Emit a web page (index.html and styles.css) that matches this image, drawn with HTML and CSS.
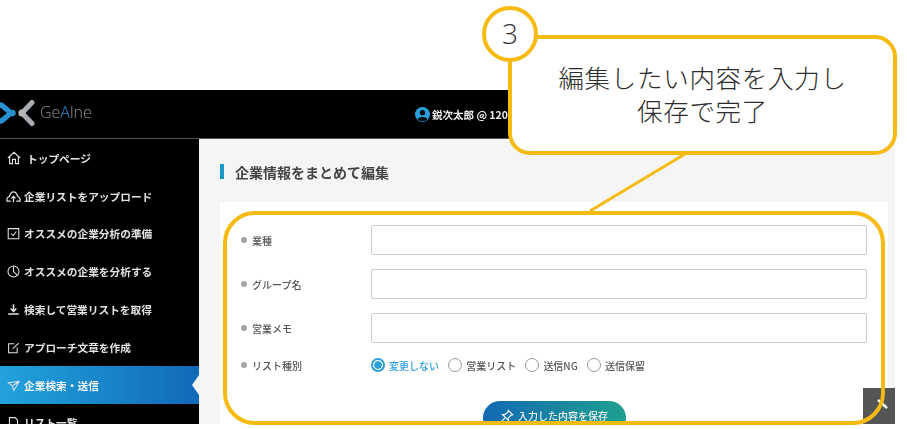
FILE: index.html
```html
<!DOCTYPE html>
<html lang="ja">
<head>
<meta charset="utf-8">
<title>企業情報をまとめて編集</title>
<link rel="stylesheet" href="styles.css">
</head>
<body>
<div class="app">
  <header class="topbar">
    <div class="logo">
      <svg class="logo-mark" width="38" height="30" viewBox="0 0 38 30">
        <path d="M-3 5 L2 6.500 L11 14 L2 21.500 L-3 23" fill="none" stroke="#2a8fd0" stroke-width="5.500" stroke-linejoin="round"/>
        <circle cx="12.500" cy="14" r="3.200" fill="#2a8fd0"/>
        <path d="M32 3.500 L22 14 L32 24.500" fill="none" stroke="#a9acb0" stroke-width="5" stroke-linecap="round" stroke-linejoin="round"/>
        <circle cx="22" cy="14" r="3.600" fill="#b5b8bb"/>
      </svg>
      <span class="logo-text">Ge<span class="logo-a">A</span>lne</span>
    </div>
    <div class="user">
      <svg width="15" height="15" viewBox="0 0 16 16"><circle cx="8" cy="8" r="8" fill="#2a9fdc"/><circle cx="8" cy="6" r="2.800" fill="#0a0a0a"/><path d="M2.800 13 C4 9.800 12 9.800 13.200 13 A7 7 0 0 1 2.800 13Z" fill="#0a0a0a"/></svg>
      <span>鋭次太郎 @ 120</span>
    </div>
  </header>
  <div class="columns">
    <nav class="sidebar">
      <a class="nav-item"><svg class="ico ico-home" viewBox="0 0 16 16"><path d="M1 8 L8 1.500 L15 8 M3 6.500 V14.500 H6.300 V9.500 H9.700 V14.500 H13 V6.500"/></svg>トップページ</a>
      <a class="nav-item"><svg class="ico ico-cloud" viewBox="0 0 16 16"><path d="M5 13 H1 L1 11 C1 9.500 2 8.500 3.500 8 C4.500 4.500 6 3 8 3 C10 3 11.500 4.500 12.500 8 C14 8.500 15 9.500 15 11 V13 H11 M8 14 V8 M5.800 10 L8 7.800 L10.200 10"/></svg>企業リストをアップロード</a>
      <a class="nav-item"><svg class="ico" viewBox="0 0 16 16"><path d="M1.500 2 H14.500 V14.500 H1.500 Z M5 8 L7.500 10.500 L11.500 5.500"/></svg>オススメの企業分析の準備</a>
      <a class="nav-item"><svg class="ico" viewBox="0 0 16 16"><circle cx="8" cy="8" r="6.800"/><path d="M8 1.500 V8 L12.500 12.500"/></svg>オススメの企業を分析する</a>
      <a class="nav-item"><svg class="ico ico-bold" viewBox="0 0 16 16"><path d="M8 1.500 V10 M4.500 6.800 L8 10.300 L11.500 6.800 M1.500 13.500 H14.500"/></svg>検索して営業リストを取得</a>
      <a class="nav-item"><svg class="ico" viewBox="0 0 16 16"><path d="M9 3.500 H2 V14.500 H12.500 V8 M7 9.500 L14.500 2.500"/></svg>アプローチ文章を作成</a>
      <a class="nav-item is-active"><svg class="ico" viewBox="0 0 16 16"><path d="M1.500 4.500 L15 3 L8.500 14 L6.500 8.500 Z M6.500 8.500 L15 3"/></svg>企業検索・送信</a>
      <a class="nav-item"><svg class="ico" viewBox="0 0 16 16"><path d="M3 2 H10 L13 5 V14 H3 Z"/></svg>リスト一覧</a>
    </nav>
    <main class="content">
      <h1 class="page-title">企業情報をまとめて編集</h1>
      <form class="card">
        <div class="field">
          <span class="label">業種</span>
          <span class="input"></span>
        </div>
        <div class="field">
          <span class="label">グループ名</span>
          <span class="input"></span>
        </div>
        <div class="field">
          <span class="label">営業メモ</span>
          <span class="input"></span>
        </div>
        <div class="field field-radio">
          <span class="label">リスト種別</span>
          <div class="radios">
            <span class="radio is-on"><i class="dot"></i>変更しない</span>
            <span class="radio"><i class="dot"></i>営業リスト</span>
            <span class="radio"><i class="dot"></i>送信NG</span>
            <span class="radio"><i class="dot"></i>送信保留</span>
          </div>
        </div>
        <div class="actions">
          <span class="save">
            <svg width="14" height="14" viewBox="0 0 16 16" fill="none" stroke="#fff" stroke-width="1.300"><path d="M9.500 1.500 L14.500 6.500 L12.500 7 L9.500 10.500 L9.500 13 L3 6.500 L5.500 6.500 L9 3.500 Z M5.500 10.500 L1.500 14.500"/></svg>
            入力した内容を保存
          </span>
        </div>
      </form>
      <span class="to-top"><svg class="to-top-mark" width="32" height="36" viewBox="0 0 32 36" fill="none" stroke="#fff" stroke-width="2.500"><path d="M15 12 L24 20"/></svg></span>
    </main>
  </div>
</div>

<svg class="connector" width="907" height="429" viewBox="0 0 907 429"><path d="M685 154 L590 211" fill="none" stroke="#f5bb12" stroke-width="3"/></svg>
<div class="focus-frame"></div>
<div class="callout">編集したい内容を入力し<br>保存で完了</div>
<div class="badge">3</div>
</body>
</html>
```

FILE: styles.css
```css
* { box-sizing: border-box; }
html, body { margin: 0; padding: 0; }
body {
  position: relative;
  width: 907px;
  height: 429px;
  overflow: hidden;
  background: #fff;
  padding-top: 90px;
  font-family: "Noto Sans CJK JP", "Noto Sans", sans-serif;
}
.app { width: 895px; height: 334px; display: flex; flex-direction: column; overflow: hidden; filter: blur(0.35px); }

.topbar {
  height: 49px;
  flex: none;
  background: #000;
  border-bottom: 1px solid #555;
  display: flex;
  align-items: center;
  position: relative;
}
.logo { display: flex; align-items: center; gap: 2px; width: 415px; }
.logo-mark { display: block; }
.logo-text { color: #8e9194; font: 300 16px "Open Sans", sans-serif; margin-top: -4px; }
.logo-a { color: #2a8fd0; }
.user { display: flex; align-items: center; gap: 2px; color: #eee; font-size: 10.500px; font-weight: 700; white-space: nowrap; }

.columns { flex: 1; display: flex; min-height: 0; }
.sidebar { width: 199px; flex: none; background: #000; overflow: hidden; }
.nav-item {
  height: 37.800px;
  display: flex;
  align-items: center;
  gap: 4px;
  padding: 1px 0 0 7px;
  color: #e2e2e2;
  font-size: 10.700px;
  font-weight: 700;
  white-space: nowrap;
  position: relative;
}
.ico { width: 13px; height: 13px; flex: none; fill: none; stroke: #e2e2e2; stroke-width: 1.300; }
.ico-bold { stroke-width: 1.900; }
.ico-home { width: 14px; height: 14px; margin-right: 2px; }
.ico-cloud { width: 15px; height: 15px; margin-left: -1px; margin-right: -1px; }
.is-active { background: linear-gradient(90deg, #22a3dd, #1069b8); color: #f4f4f4; }
.is-active::after {
  content: "";
  position: absolute;
  right: 0;
  top: 9px;
  border: 10px solid transparent;
  border-right: 7px solid #f5f5f5;
  border-left-width: 0;
}

.content { flex: 1; background: #f5f5f5; position: relative; padding: 0 7px 0 21px; min-width: 0; overflow: hidden; }
.page-title {
  margin: 25px 0 23px;
  height: 15px;
  display: flex;
  align-items: center;
  font-size: 14px;
  font-weight: 700;
  color: #444;
  padding-left: 11px;
  border-left: 4px solid #1c95c8;
  line-height: 16px;
}
.card { background: #fff; padding: 23px 21px 0 21px; height: 230px; }
.field { display: flex; align-items: center; height: 30px; margin-bottom: 14px; }
.label {
  width: 130px;
  flex: none;
  display: flex;
  align-items: center;
  gap: 5px;
  color: #555;
  font-size: 10px;
  font-weight: 500;
}
.label::before { content: ""; width: 6px; height: 6px; border-radius: 50%; background: #a5a5a5; flex: none; }
.input { flex: 1; height: 30px; border: 1px solid #ccc; border-radius: 2px; background: #fff; }
.field-radio { height: 18px; margin-bottom: 0; margin-top: -1px; }
.radios { display: flex; gap: 9.200px; color: #555; font-size: 10px; font-weight: 500; }
.radio { display: flex; align-items: center; gap: 4px; white-space: nowrap; }
.dot { width: 14px; height: 14px; border: 1px solid #999; border-radius: 50%; background: #fff; flex: none; }
.is-on { color: #2a9fdc; }
.is-on .dot { border: 2px solid #2a9fdc; background: radial-gradient(circle, #2a9fdc 0 3.500px, #fff 4px); }
.actions { display: flex; justify-content: center; margin-top: 27px; }
.save {
  width: 143px;
  height: 34px;
  border-radius: 17px;
  background: linear-gradient(90deg, #1269b4, #1fa08e);
  color: #f2f2f2;
  font-size: 10px;
  font-weight: 500;
  display: flex;
  align-items: center;
  justify-content: center;
  gap: 4px;
  padding-bottom: 5px;
}
.to-top {
  position: absolute;
  right: 0;
  top: 249px;
  width: 32px;
  height: 36px;
  background: #555;
}
.to-top-mark { display: block; }

.connector { position: absolute; left: 0; top: 0; }
.focus-frame {
  position: absolute;
  left: 223px;
  top: 211px;
  width: 662px;
  height: 214px;
  border: 4px solid #f5bb12;
  border-radius: 32px;
}
.callout {
  position: absolute;
  left: 508px;
  top: 35px;
  width: 389px;
  height: 120px;
  background: #fff;
  border: 4px solid #f5bb12;
  border-radius: 22px;
  color: #2c2c2c;
  font-size: 25.500px;
  font-weight: 300;
  letter-spacing: 0.700px;
  line-height: 33px;
  text-align: center;
  padding-top: 21px;
}
.badge {
  position: absolute;
  left: 482px;
  top: 6px;
  width: 56px;
  height: 56px;
  border-radius: 50%;
  background: #fff;
  border: 4px solid #f5bb12;
  color: #333;
  font: 300 28px/46px "Open Sans", sans-serif;
  text-align: center;
}
```
